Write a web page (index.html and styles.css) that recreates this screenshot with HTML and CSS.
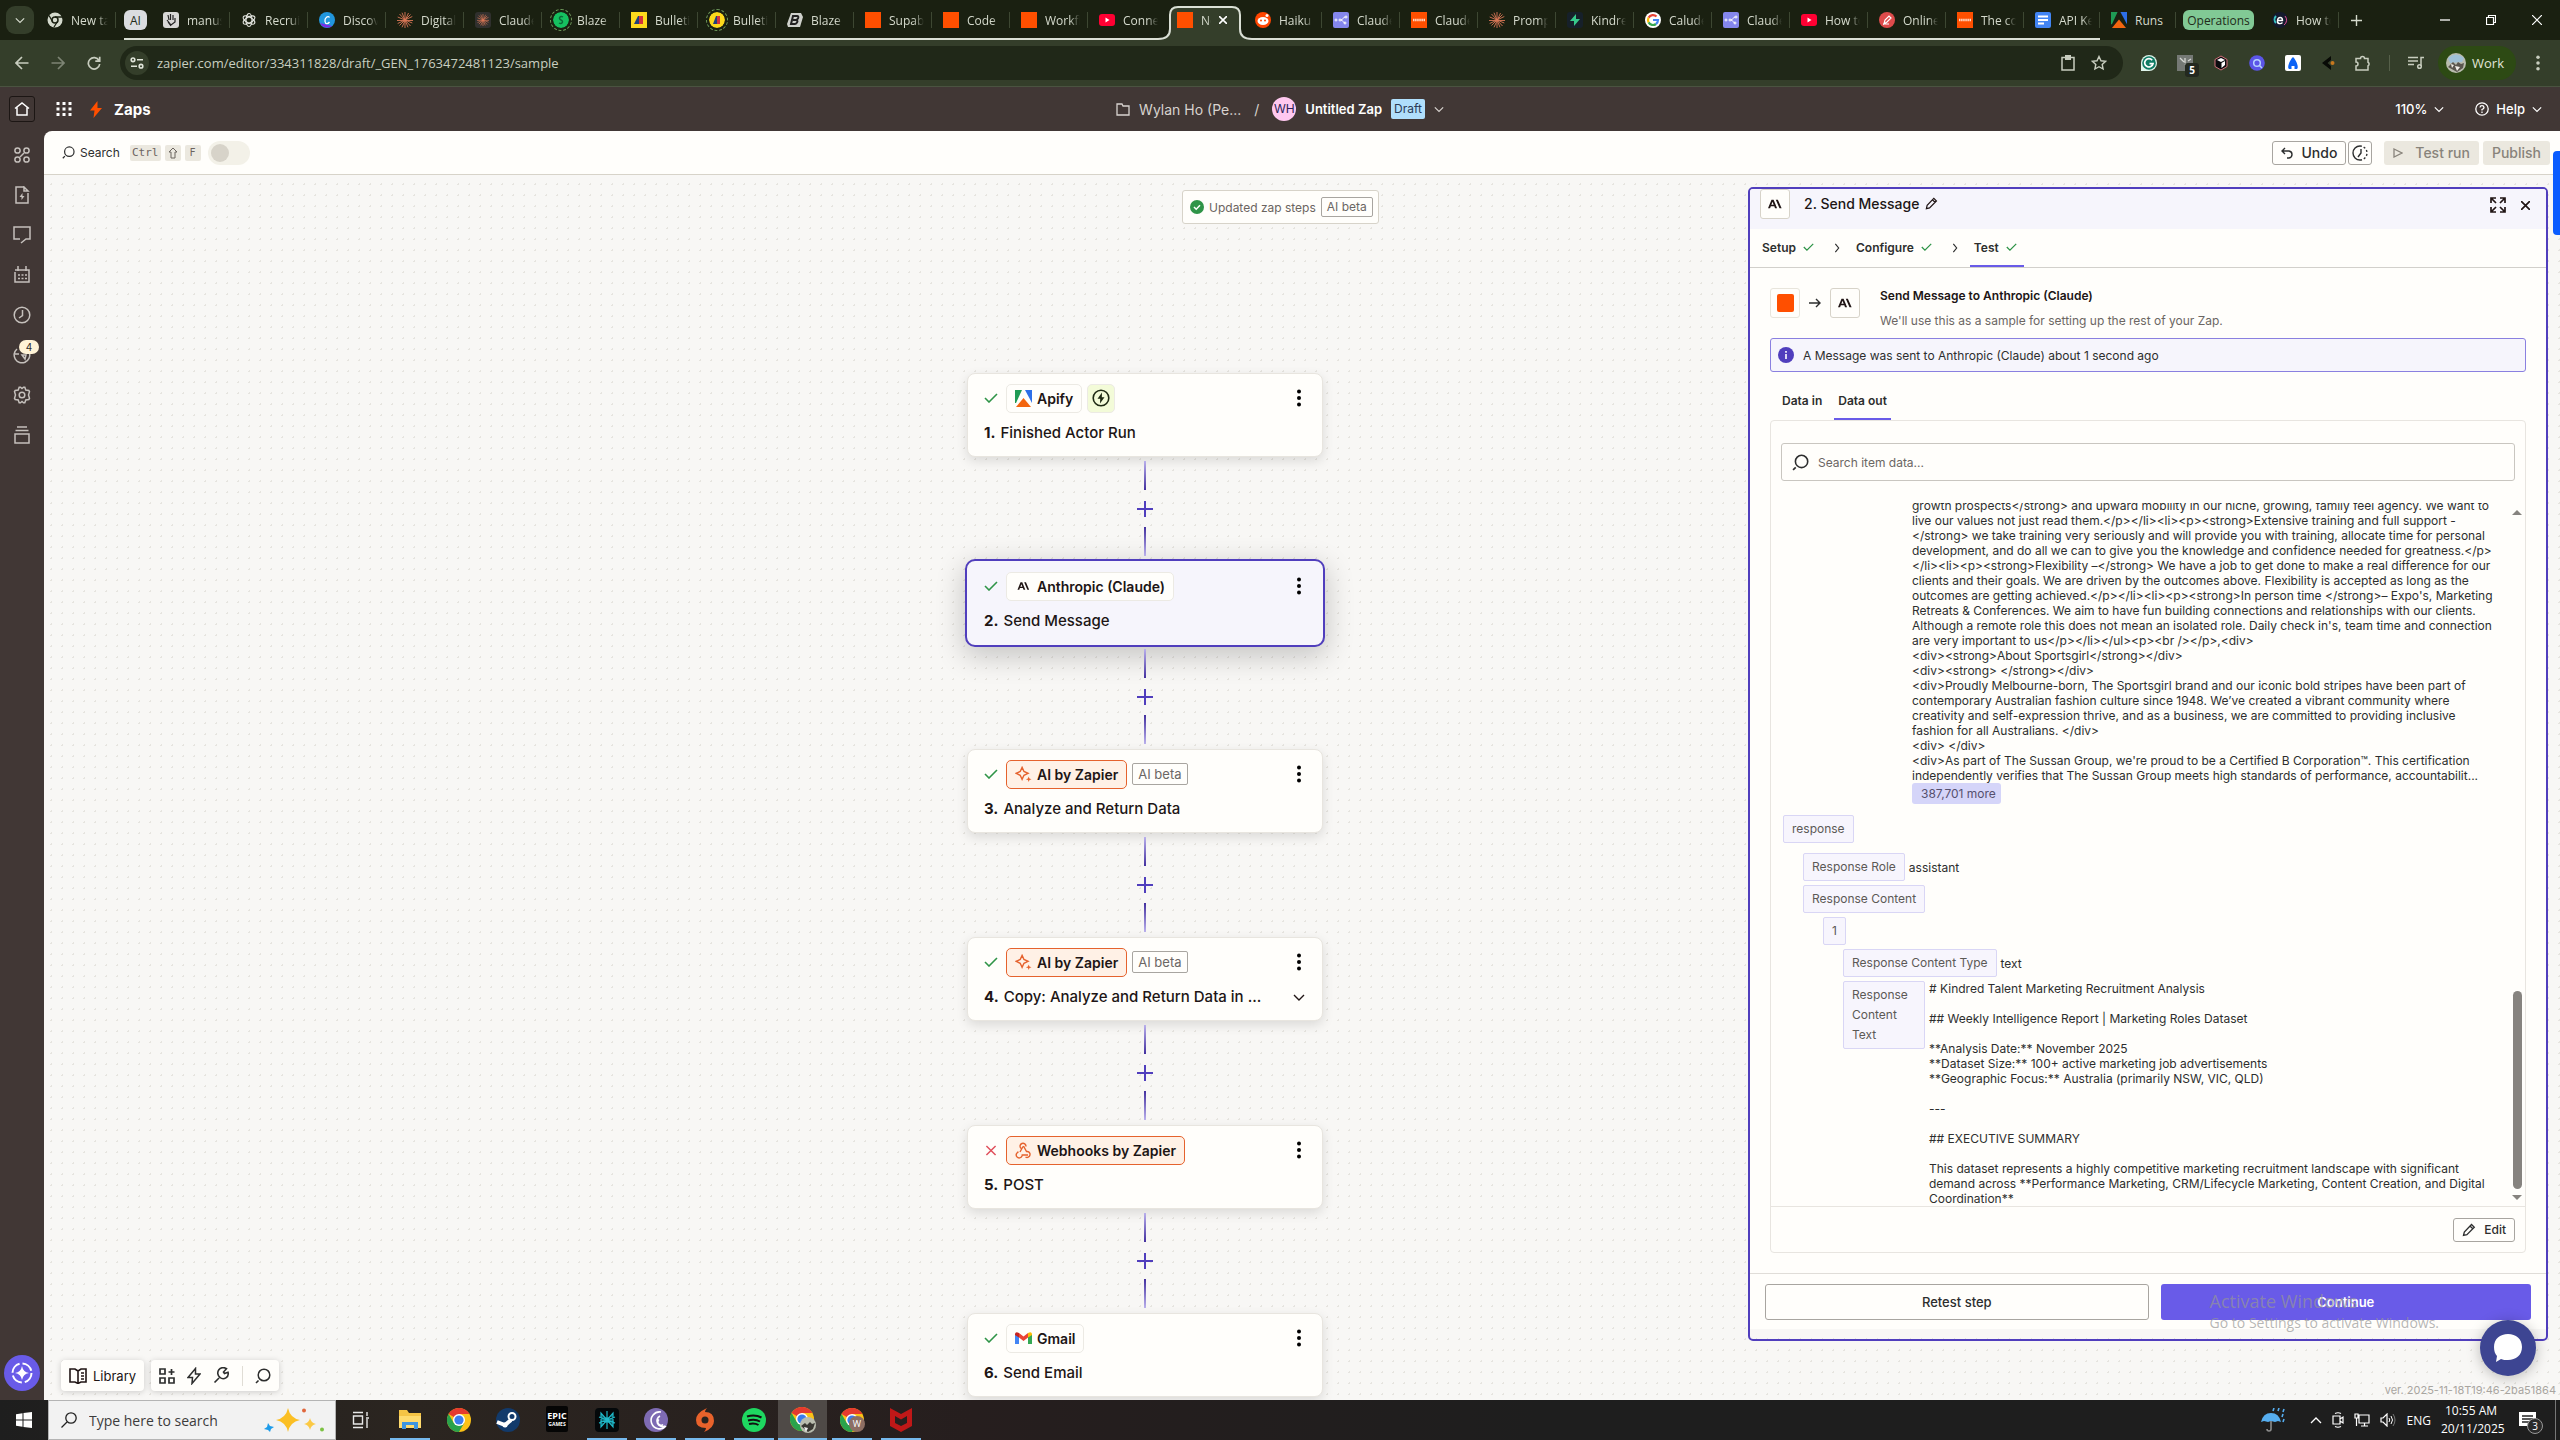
FILE: index.html
```html
<!DOCTYPE html>
<html lang="en">
<head>
  <meta charset="UTF-8" />
  <meta name="viewport" content="width=device-width, initial-scale=1.0"/>
  <title>Untitled Zap | Zapier</title>
  <link rel="stylesheet" href="styles.css">
</head>
<body>

  <!-- shared icons -->
  <svg class="defs" aria-hidden="true">
    <symbol id="i-check" viewBox="0 0 14 10"><path d="M1 5l4 4 8-8" fill="none" stroke="#2f9448" stroke-width="1.6"/></symbol>
    <symbol id="i-cross" viewBox="0 0 12 12"><path d="M1 1l10 10M11 1L1 11" fill="none" stroke="#e0505c" stroke-width="1.6"/></symbol>
    <symbol id="i-down" viewBox="0 0 12 12"><path d="M1 4l5 5 5-5" fill="none" stroke="currentColor" stroke-width="1.4"/></symbol>
    <symbol id="i-right" viewBox="0 0 6 12"><path d="M1 1l4 5-4 5" fill="none" stroke="currentColor" stroke-width="1.4"/></symbol>
    <symbol id="i-plus" viewBox="0 0 16 16"><path d="M8 0v16M0 8h16" stroke="currentColor" stroke-width="2"/></symbol>
    <symbol id="i-kebab" viewBox="0 0 4 18"><circle cx="2" cy="2.5" r="2"/><circle cx="2" cy="9" r="2"/><circle cx="2" cy="15.5" r="2"/></symbol>
    <symbol id="i-search" viewBox="0 0 16 16"><path d="M1 15l2.5-2.5" stroke="currentColor" stroke-width="1.6"/><circle cx="9" cy="7" r="5.8" fill="none" stroke="currentColor" stroke-width="1.5"/></symbol>
    <symbol id="i-pencil" viewBox="0 0 14 14"><path d="M1.5 12.5l.8-3.5L9.500 1.500l2.800 2.800-7.400 7.400z M8 3l2.800 2.800" fill="none" stroke="currentColor" stroke-width="1.3"/></symbol>
    <symbol id="i-anthropic" viewBox="0 0 18 12"><path d="M0 11.500L4.500.5h2.700l4.500 11H9l-.9-2.500H3.600l-.9 2.500zM4.300 7h3L5.800 3.200zM10 .5h2.700l4.800 11h-2.700z" fill="currentColor"/></symbol>
    <symbol id="i-star4" viewBox="0 0 18 18"><path d="M7.500 1.500l2 4.300 4.300 2-4.300 2-2 4.300-2-4.300-4.300-2 4.300-2z" fill="none" stroke="#e5622d" stroke-width="1.5"/><path d="M14.500 11l.8 2.200 2.200.8-2.200.8-.8 2.200-.8-2.200-2.200-.8 2.200-.8z" fill="#e5622d"/></symbol>
    <symbol id="i-claude" viewBox="0 0 16 16"><path d="M8 0v16M0 8.500h16M2.500 2l11 12M13.500 2.500l-11 11M5 .7l6 14.600M11.500 1L5 15.300M.7 5l14.600 6M.7 11.500l14.600-7" stroke="#d97757" stroke-width=".9"/></symbol>
    <symbol id="i-square" viewBox="0 0 16 16"><path d="M0 0h16v16H0z" fill="#ff4f00"/></symbol>
    <symbol id="i-youtube" viewBox="0 0 16 16"><rect y="2" width="16" height="12" rx="3" fill="#f03"/><path d="M6.500 5.500v5l4-2.500z" fill="#fff"/></symbol>
    <symbol id="i-chrome" viewBox="0 0 24 24"><circle cx="12" cy="12" r="12" fill="#fbc116"/><path d="M12 12L1.600 6A12 12 0 0 1 22.400 6H12z" fill="#e53a2e"/><path d="M1.600 6A12 12 0 0 0 12 24l5.200-9L12 12 6.800 15z" fill="#2aa24c"/><circle cx="12" cy="12" r="6" fill="#fff"/><circle cx="12" cy="12" r="4.600" fill="#3b7ded"/></symbol>
    <symbol id="i-node" viewBox="0 0 16 16"><rect width="16" height="16" rx="2" fill="#8587ee"/><g fill="none" stroke="#fff"><circle cx="3" cy="8" r="1"/><circle cx="7" cy="8" r="1"/><path d="M8 8c2 0 2-3 4-3M8 8c2 0 2 3 4 3"/><circle cx="13" cy="5" r="1"/><circle cx="12" cy="11" r="1"/></g></symbol>
    <symbol id="i-zap" viewBox="0 0 16 16"><path d="M0 0h16v16H0z" fill="#ff4f00"/><path d="M2 8h12" stroke="#ffd9c7" stroke-width="2.5" stroke-dasharray="1.500 .6"/></symbol>
    <symbol id="i-apify" viewBox="0 0 17 17"><path d="M0 0h7L1 13H0z" fill="#1f9b55"/><path d="M10 0h7v13z" fill="#2d6fe8"/><path d="M8.500 8L16 17H1z" fill="#f3650f"/></symbol>
  </svg>

  <div class="tabstrip">
    <button class="tab-search" aria-label="Search tabs"><svg width="10" height="10"><use href="#i-down"/></svg></button>
    <a class="tab first" href="#"><svg width="16" height="16" viewBox="0 0 16 16"><circle cx="8" cy="8" r="7.500" fill="#d5dacd"/><circle cx="8" cy="8" r="3" fill="#d5dacd" stroke="#1a2011" stroke-width="1.5"/><path d="M8 5h7M5.500 9.500L2 3.500M10.500 9.500L7 15" stroke="#1a2011" stroke-width="1.3"/></svg><span>New tab</span></a>
    <div class="tab-group">
      <span class="chip-ai">AI</span>
      <a class="tab" href="#"><svg width="16" height="16" viewBox="0 0 16 16"><rect width="16" height="16" rx="3" fill="#d8d8d6"/><path d="M5 3l1 5M7.500 2v6M10 3v5M4 8l4 5 4-3V6M5 10l3 4" fill="none" stroke="#222" stroke-width="1.2"/></svg><span>manus</span></a>
      <a class="tab" href="#"><svg width="16" height="16" viewBox="0 0 16 16"><g fill="none" stroke="#e4e6e0" stroke-width="1.2"><ellipse cx="8" cy="8" rx="3" ry="6.500"/><ellipse cx="8" cy="8" rx="3" ry="6.500" transform="rotate(60 8 8)"/><ellipse cx="8" cy="8" rx="3" ry="6.500" transform="rotate(120 8 8)"/></g></svg><span>Recruit</span></a>
      <a class="tab" href="#"><svg width="16" height="16" viewBox="0 0 16 16"><circle cx="8" cy="8" r="8" fill="#2196dd"/><path d="M1 11A8 8 0 0 0 13 14z" fill="#7d2ae8"/><path d="M10.500 5.500C9 3 5.500 6 6 9.500c.5 3 3 2.500 4.500.5" fill="none" stroke="#fff" stroke-width="1.3"/></svg><span>Discover</span></a>
      <a class="tab" href="#"><svg width="16" height="16"><use href="#i-claude"/></svg><span>Digital</span></a>
      <a class="tab" href="#"><svg class="fav-dark" width="16" height="16"><use href="#i-claude" x="2" y="2" width="12" height="12"/></svg><span>Claude</span></a>
      <a class="tab" href="#"><svg class="fav-ring" width="16" height="16" viewBox="0 0 16 16"><circle cx="8" cy="8" r="8" fill="#16c060"/><path d="M10 5c-3-2-5 2-2 3s1 5-2 3" fill="none" stroke="#0b6b38" stroke-width="1.5"/></svg><span>Blaze</span></a>
      <a class="tab" href="#"><svg width="16" height="16" viewBox="0 0 16 16"><path d="M0 0h16v16H0z" fill="#fcd91c"/><path d="M3 12l4-8h5v8z" fill="#20407c"/><path d="M8 4h4v8H8z" fill="#d2333c"/></svg><span>Bulletin</span></a>
      <a class="tab" href="#"><svg class="fav-ring" width="16" height="16" viewBox="0 0 16 16"><circle cx="8" cy="8" r="8" fill="#fcd91c"/><path d="M4 12l3-8h4v8z" fill="#20407c"/><path d="M8 4h3v8H8z" fill="#d2333c"/></svg><span>Bulletin</span></a>
      <a class="tab" href="#"><svg width="16" height="16" viewBox="0 0 16 16"><path d="M4 1h10l2 4-3 10H1L0 12z" fill="#cfd1cc"/><path d="M6 4h4q2 0 1 2.500L9.500 8q1.500 1 .5 2.500T8 12H4zM6 8h3" fill="none" stroke="#222" stroke-width="2"/></svg><span>Blaze</span></a>
      <a class="tab" href="#"><svg width="16" height="16"><use href="#i-square"/></svg><span>Supabase</span></a>
      <a class="tab" href="#"><svg width="16" height="16"><use href="#i-square"/></svg><span>Code</span></a>
      <a class="tab" href="#"><svg width="16" height="16"><use href="#i-square"/></svg><span>Workflow</span></a>
      <a class="tab last-before" href="#"><svg width="16" height="16"><use href="#i-youtube"/></svg><span>Connect</span></a>
      <div class="tab active">
        <svg class="tab-shape" width="94" height="34" viewBox="0 0 94 34"><path d="M0 33q12 0 12-10V9q0-8 8-8h54q8 0 8 8v14q0 10 12 10v2H0z" fill="#343e2a"/><path d="M0 33q12 0 12-10V9q0-8 8-8h54q8 0 8 8v14q0 10 12 10" fill="none" stroke="#dadfd5" stroke-width="2"/></svg>
        <svg width="16" height="16"><use href="#i-square"/></svg><span>New</span>
        <button aria-label="Close tab"><svg width="8" height="8" viewBox="0 0 8 8"><path d="M0 0l8 8M8 0L0 8" stroke="#fff" stroke-width="1.6"/></svg></button>
      </div>
      <a class="tab" href="#"><svg width="16" height="16" viewBox="0 0 16 16"><circle cx="8" cy="8" r="8" fill="#ff4500"/><ellipse cx="8" cy="9" rx="5.500" ry="4" fill="#fff"/><circle cx="12" cy="3.500" r="1.500" fill="#fff"/><circle cx="6" cy="8.500" r="1" fill="#ff4500"/><circle cx="10" cy="8.500" r="1" fill="#ff4500"/></svg><span>Haiku</span></a>
      <a class="tab" href="#"><svg width="16" height="16"><use href="#i-node"/></svg><span>Claude</span></a>
      <a class="tab" href="#"><svg width="16" height="16"><use href="#i-zap"/></svg><span>Claude</span></a>
      <a class="tab" href="#"><svg width="16" height="16"><use href="#i-claude"/></svg><span>Prompt</span></a>
      <a class="tab" href="#"><svg width="16" height="16" viewBox="0 0 16 16"><rect width="16" height="16" rx="3" fill="#16202a"/><path d="M9 2L3 9h4v5l6-7H9z" fill="#37c98b"/></svg><span>Kindred</span></a>
      <a class="tab" href="#"><svg width="16" height="16" viewBox="0 0 16 16"><circle cx="8" cy="8" r="8" fill="#fff"/><g fill="none" stroke-width="2.2"><path d="M11.500 4.500A5 5 0 0 0 3.600 5.600" stroke="#ea4335"/><path d="M3.600 5.600a5 5 0 0 0 0 4.800" stroke="#fbbc05"/><path d="M3.600 10.400a5 5 0 0 0 7.400 1.600" stroke="#34a853"/><path d="M11 12a5 5 0 0 0 2-4H8" stroke="#4285f4"/></g></svg><span>Calude</span></a>
      <a class="tab" href="#"><svg width="16" height="16"><use href="#i-node"/></svg><span>Claude</span></a>
      <a class="tab" href="#"><svg width="16" height="16"><use href="#i-youtube"/></svg><span>How to</span></a>
      <a class="tab" href="#"><svg width="16" height="16" viewBox="0 0 16 16"><circle cx="8" cy="8" r="8" fill="#dd4b4b"/><path d="M5 12l1-4 4-4 2 2-4 4zM4 12h6" fill="none" stroke="#fff" stroke-width="1.2"/></svg><span>Online</span></a>
      <a class="tab" href="#"><svg width="16" height="16"><use href="#i-zap"/></svg><span>The complete</span></a>
      <a class="tab narrow" href="#"><svg width="16" height="16" viewBox="0 0 16 16"><rect width="16" height="16" rx="2" fill="#4285f4"/><path d="M3 4.500h10M3 8h10M3 11.500h6" stroke="#fff" stroke-width="1.8"/></svg><span>API Keys</span></a>
    </div>
    <a class="tab runs narrow" href="#"><svg width="16" height="16"><use href="#i-apify"/></svg><span>Runs</span></a>
    <span class="chip-ops">Operations</span>
    <a class="tab" href="#"><svg width="16" height="16" viewBox="0 0 16 16"><circle cx="8" cy="8" r="8" fill="#14192e"/><path d="M4 11a5 5 0 0 1 0-7" fill="none" stroke="#38c0c0" stroke-width="2"/><path d="M5.500 8.500h5c0-4-4.500-4-5 0s3.500 3.500 5 2" fill="none" stroke="#fff" stroke-width="1.4"/><path d="M13 4a6 6 0 0 1-1 9" fill="none" stroke="#e0508c"/></svg><span>How to</span></a>
    <button class="new-tab" aria-label="New tab"><svg width="11" height="11"><use href="#i-plus"/></svg></button>
    <div class="window-controls">
      <button aria-label="Minimize"><svg width="10" height="10" viewBox="0 0 10 10"><path d="M0 5h10" stroke="#fff" stroke-width="1.3"/></svg></button>
      <button aria-label="Restore"><svg width="10" height="10" viewBox="0 0 10 10"><path d="M.5 2.500h7v7h-7zM2.500 2.500v-2h7v7h-2" fill="none" stroke="#fff" stroke-width="1.2"/></svg></button>
      <button aria-label="Close"><svg width="10" height="10" viewBox="0 0 10 10"><path d="M0 0l10 10M10 0L0 10" stroke="#fff" stroke-width="1.2"/></svg></button>
    </div>
  </div>

  <div class="toolbar">
    <button class="nav-btn" aria-label="Back"><svg width="14" height="14" viewBox="0 0 14 14"><path d="M13.500 7H1.500M7 1L1 7l6 6" fill="none" stroke="#c8cdbf" stroke-width="1.7"/></svg></button>
    <button class="nav-btn" aria-label="Forward"><svg width="14" height="14" viewBox="0 0 14 14"><path d="M.5 7h12M7 1l6 6-6 6" fill="none" stroke="#7d8474" stroke-width="1.7"/></svg></button>
    <button class="nav-btn" aria-label="Reload"><svg width="14" height="14" viewBox="0 0 14 14"><path d="M12 4.500A5.700 5.700 0 1 0 12.700 8M12.700.8v4.400H8.300" fill="none" stroke="#c8cdbf" stroke-width="1.7"/></svg></button>
    <div class="omnibox">
      <button class="site-info" aria-label="Site information"><svg width="14" height="12" viewBox="0 0 14 12"><g fill="none" stroke="#e1e5da" stroke-width="1.6"><circle cx="3" cy="2.800" r="1.800"/><path d="M7 2.800h6M1 9.200h6"/><circle cx="11" cy="9.200" r="1.800"/></g></svg></button>
      <input type="text" aria-label="Address" value="zapier.com/editor/334311828/draft/_GEN_1763472481123/sample">
      <svg width="14" height="16" viewBox="0 0 14 16"><path d="M1 2.500h12V15H1z" fill="none" stroke="#c8cdbf" stroke-width="1.5"/><path d="M4 0h6v5H4z" fill="#c8cdbf"/></svg>
      <svg width="16" height="16" viewBox="0 0 16 16"><path d="M8 1.500l2 4.300 4.600.5-3.400 3.100.9 4.600L8 11.700 3.900 14l.9-4.600L1.400 6.300 6 5.800z" fill="none" stroke="#c8cdbf" stroke-width="1.4"/></svg>
    </div>
    <div class="extensions">
      <svg width="16" height="16" viewBox="0 0 16 16"><path d="M8 0a8 8 0 1 1 0 16H0V8a8 8 0 0 1 8-8z" fill="#dff5ec"/><circle cx="8" cy="8" r="6.800" fill="#0e7a63"/><path d="M11.200 5.200A4.200 4.200 0 1 0 12 8.700H8.500" fill="none" stroke="#fff" stroke-width="1.7"/></svg>
      <div class="ext-badge"><svg width="16" height="16" viewBox="0 0 16 16"><path d="M0 0h16v16H0z" fill="#757975"/><path d="M3 3l4 4M8 3v5M8 9l4 4M11 6l3-2" stroke="#d5d7d3" stroke-width="1.3"/></svg><span>5</span></div>
      <svg width="16" height="16" viewBox="0 0 16 16"><path d="M8 1l6 3.500v7L8 15l-6-3.500v-7z" fill="#0b0b0f" stroke="#d0707a"/><path d="M4 5l4-2 4 2-4 2zM8.500 8l3.500-2v4L8.500 13z" fill="#fff"/></svg>
      <svg width="16" height="16" viewBox="0 0 16 16"><circle cx="8" cy="8" r="7.800" fill="#5b55e8"/><circle cx="8" cy="8" r="3.300" fill="none" stroke="#b5d1ff" stroke-width="1.5"/><path d="M10 10l3 3" stroke="#b5d1ff" stroke-width="1.5"/></svg>
      <svg width="16" height="16" viewBox="0 0 16 16"><rect width="16" height="16" rx="2" fill="#fff"/><path d="M8 2c4 4 6 11 4 12H9.500v-3h-3v3H4C2 13 4 6 8 2z" fill="#0b62f5"/></svg>
      <svg width="14" height="16" viewBox="0 0 14 16"><path d="M10 1L1 8l9 7v-4L6.500 8 10 5z" fill="#080a06"/><circle cx="11.500" cy="8" r="2" fill="#c8781e"/></svg>
      <svg width="16" height="16" viewBox="0 0 16 16"><path d="M1 3.500h4.500a2 2 0 0 1 4 0H13V7.200a2 2 0 0 1 0 3.600V15H1v-4a2 2 0 0 0 0-4z" fill="none" stroke="#c8cdbf" stroke-width="1.5"/></svg>
    </div>
    <span class="tool-sep"></span>
    <svg width="16" height="14" viewBox="0 0 16 14"><path d="M0 1.500h10M0 5h10M0 8.500h6M13 10V1.500h3" fill="none" stroke="#c8cdbf" stroke-width="1.5"/><circle cx="11.500" cy="10.500" r="1.800" fill="none" stroke="#c8cdbf" stroke-width="1.5"/></svg>
    <button class="profile"><svg width="20" height="20" viewBox="0 0 20 20"><circle cx="10" cy="10" r="10" fill="#b9bcae"/><path d="M2 5q8-7 16 0l-2 4-12 1z" fill="#9fc0d6"/><path d="M2 14l5-5 3 3 2-3 3 2 3-1-1 5-6 4z" fill="#5a564e"/><path d="M5 11l3 1-2 3zM9 13l5 1-3 4z" fill="#f1eee8"/></svg>Work</button>
    <button class="more" aria-label="Chrome menu"><svg width="4" height="16" fill="#c8cdbf"><use href="#i-kebab"/></svg></button>
  </div>

  <div class="app">
    <nav class="rail">
      <a class="home" href="#" aria-label="Home"><svg width="16" height="14" viewBox="0 0 16 14"><path d="M1 6.500L8 1l7 5.500M3 5.500V13h10V5.500" fill="none" stroke="#fff"/></svg></a>
      <a href="#" aria-label="Apps"><svg width="16" height="16" viewBox="0 0 16 16"><circle cx="3.500" cy="3.500" r="2.600"/><circle cx="12.500" cy="3.500" r="2.600"/><circle cx="3.500" cy="12.500" r="2.600"/><circle cx="12.500" cy="12.500" r="2.600"/><path d="M6 10l4-4"/></svg></a>
      <a href="#" aria-label="Templates"><svg width="16" height="18" viewBox="0 0 16 18"><path d="M10 1H2v16h12V7M10 1v4h4z"/><path d="M8.500 7L5.500 11h2v3l3-4h-2z" fill="#c5c0bc" stroke="none"/></svg></a>
      <a href="#" aria-label="Chat"><svg width="18" height="18" viewBox="0 0 18 18"><path d="M7 13H1V1h16v12h-4l-5 4"/></svg></a>
      <a href="#" aria-label="Calendar"><svg width="16" height="18" viewBox="0 0 16 18"><path d="M1 6V16h14V4H1M4 0v5M12 0v5"/><path d="M4 9h9M4 12.500h9" stroke-dasharray="2 1.500"/></svg></a>
      <a href="#" aria-label="History"><svg width="18" height="18" viewBox="0 0 18 18"><circle cx="9" cy="9" r="7.800"/><path d="M9.500 4v5.500L6 12"/></svg></a>
      <a href="#" aria-label="Activity"><svg width="18" height="18" viewBox="0 0 18 18"><path d="M4 3a7.800 7.800 0 1 0 12.500 4M2 8h4M9 9l3 4 1-4z"/></svg><span class="badge">4</span></a>
      <a href="#" aria-label="Settings"><svg width="18" height="18" viewBox="0 0 18 18"><path d="M6.200 1.200h1.300L9 2.500l1.500-1.300h1.300l1 2.800 3 .5.700 1.200L15.500 9l1 3.300-.7 1.200-3 .5-1 2.800h-1.300L9 15.500l-1.500 1.300H6.200l-1-2.800-3-.5-.7-1.200L2.500 9l-1-3.300.7-1.200 3-.5z"/><circle cx="9" cy="9" r="2.800"/></svg></a>
      <a href="#" aria-label="Archive"><svg width="16" height="18" viewBox="0 0 16 18"><path d="M3 1h10M1.500 4.500h13M1 8h14v9H1z"/></svg></a>
      <button class="copilot" aria-label="Copilot"><svg width="24" height="24" viewBox="0 0 24 24"><circle cx="12" cy="12" r="9.500" fill="none" stroke="#fff" stroke-width="2" stroke-dasharray="12 3"/><path d="M12 5q1 6 7 7-6 1-7 7-1-6-7-7 6-1 7-7z" fill="#fff"/></svg></button>
    </nav>

    <div class="main">
      <header class="zap-header">
        <div class="brand">
          <svg width="16" height="16" viewBox="0 0 16 16" fill="#fff"><path d="M.5 1h3v3h-3zM6.500 1h3v3h-3zM12.500 1h3v3h-3zM.5 6.500h3v3h-3zM6.500 6.500h3v3h-3zM12.500 6.500h3v3h-3zM.5 12h3v3h-3zM6.500 12h3v3h-3zM12.500 12h3v3h-3z"/></svg>
          <svg width="12" height="17" viewBox="0 0 12 17"><path d="M7.500 0L0 9.500h4.500L3.500 17 12 7H7.500z" fill="#ff4f00"/></svg>
          <strong>Zaps</strong>
        </div>
        <div class="crumbs">
          <svg width="14" height="13" viewBox="0 0 14 13"><path d="M1 12V1h5l1 2h6v9z" fill="none" stroke="#d8d3cf" stroke-width="1.3"/></svg>
          <a href="#">Wylan Ho (Pe...</a>
          <span class="slash">/</span>
          <span class="avatar">WH</span>
          <b>Untitled Zap</b>
          <span class="draft">Draft</span>
          <svg width="10" height="10"><use href="#i-down"/></svg>
        </div>
        <div class="header-right">
          <button>110% <svg width="10" height="10"><use href="#i-down"/></svg></button>
          <button><svg width="14" height="14" viewBox="0 0 14 14"><circle cx="7" cy="7" r="6.200" fill="none" stroke="#fff" stroke-width="1.3"/><path d="M5 5.500q.2-1.800 2-1.800T9 5.400Q9 6.500 7 7.500v1M7 9.500V11" fill="none" stroke="#fff" stroke-width="1.3"/></svg>Help <svg width="10" height="10"><use href="#i-down"/></svg></button>
        </div>
      </header>

      <div class="editor-bar">
        <svg width="13" height="13"><use href="#i-search"/></svg>
        <label for="canvas-toggle">Search</label>
        <kbd>Ctrl</kbd>
        <kbd class="key"><svg width="10" height="12" viewBox="0 0 10 12"><path d="M5 1L1 5h2v6h4V5h2z" fill="none" stroke="#6b645f"/></svg></kbd>
        <kbd class="key small">F</kbd>
        <input class="toggle" id="canvas-toggle" type="checkbox">
        <div class="actions">
          <button class="btn"><svg width="12" height="12" viewBox="0 0 12 12"><path d="M4 1L1 4l3 3M1 4h7q3 .5 3 3.500T8 11H6" fill="none" stroke="currentColor" stroke-width="1.4"/></svg>Undo</button>
          <button class="btn icon" aria-label="Version history"><svg width="16" height="16" viewBox="0 0 16 16"><path d="M8 1a7 7 0 0 0 0 14" fill="none" stroke="currentColor" stroke-width="1.4"/><path d="M8 15A7 7 0 0 0 8 1" fill="none" stroke="currentColor" stroke-width="1.4" stroke-dasharray="2 2"/><path d="M9 4v4l-3 4" fill="none" stroke="currentColor" stroke-width="1.4"/></svg></button>
          <button class="btn muted run" disabled><svg width="10" height="10" viewBox="0 0 10 10"><path d="M1 1l8 4-8 4z" fill="none" stroke="currentColor" stroke-width="1.3"/></svg>Test run</button>
          <button class="btn muted" disabled>Publish</button>
        </div>
      </div>

      <main class="canvas">
        <div class="toast"><svg width="14" height="14" viewBox="0 0 14 14"><circle cx="7" cy="7" r="7" fill="#2f9448"/><path d="M4 7l2.200 2.200L10 5.200" fill="none" stroke="#fff" stroke-width="1.5"/></svg>Updated zap steps <span class="beta">AI beta</span></div>

        <div class="flow">
          <article class="step">
            <div class="step-top">
              <svg class="status" width="14" height="10"><use href="#i-check"/></svg>
              <span class="app-chip"><svg width="17" height="17"><use href="#i-apify"/></svg>Apify</span>
              <span class="trigger"><svg width="18" height="18" viewBox="0 0 18 18"><circle cx="9" cy="9" r="7.800" fill="none" stroke="#1f2a14" stroke-width="1.6"/><path d="M10 3.500L5.500 9.700h2.700L8 14.500l4.500-6.200H9.800z" fill="#1f2a14"/></svg></span>
              <button class="dots" aria-label="Step menu"><svg width="4" height="18"><use href="#i-kebab"/></svg></button>
            </div>
            <h3><b>1.</b> Finished Actor Run</h3>
          </article>
          <div class="link"><i class="line"></i><button aria-label="Add step"><svg width="16" height="16"><use href="#i-plus"/></svg></button><i class="line up"></i></div>

          <article class="step selected">
            <div class="step-top">
              <svg class="status" width="14" height="10"><use href="#i-check"/></svg>
              <span class="app-chip"><svg width="17" height="8"><use href="#i-anthropic"/></svg>Anthropic (Claude)</span>
              <button class="dots" aria-label="Step menu"><svg width="4" height="18"><use href="#i-kebab"/></svg></button>
            </div>
            <h3><b>2.</b> Send Message</h3>
          </article>
          <div class="link"><i class="line"></i><button aria-label="Add step"><svg width="16" height="16"><use href="#i-plus"/></svg></button><i class="line up"></i></div>

          <article class="step">
            <div class="step-top">
              <svg class="status" width="14" height="10"><use href="#i-check"/></svg>
              <span class="app-chip zapier"><svg width="17" height="17"><use href="#i-star4"/></svg>AI by Zapier</span>
              <span class="beta">AI beta</span>
              <button class="dots" aria-label="Step menu"><svg width="4" height="18"><use href="#i-kebab"/></svg></button>
            </div>
            <h3><b>3.</b> Analyze and Return Data</h3>
          </article>
          <div class="link"><i class="line"></i><button aria-label="Add step"><svg width="16" height="16"><use href="#i-plus"/></svg></button><i class="line up"></i></div>

          <article class="step">
            <div class="step-top">
              <svg class="status" width="14" height="10"><use href="#i-check"/></svg>
              <span class="app-chip zapier"><svg width="17" height="17"><use href="#i-star4"/></svg>AI by Zapier</span>
              <span class="beta">AI beta</span>
              <button class="dots" aria-label="Step menu"><svg width="4" height="18"><use href="#i-kebab"/></svg></button>
            </div>
            <h3><b>4.</b> Copy: Analyze and Return Data in ... <svg class="expand" width="12" height="12"><use href="#i-down"/></svg></h3>
          </article>
          <div class="link"><i class="line"></i><button aria-label="Add step"><svg width="16" height="16"><use href="#i-plus"/></svg></button><i class="line up"></i></div>

          <article class="step">
            <div class="step-top">
              <svg class="status" width="14" height="11"><use href="#i-cross"/></svg>
              <span class="app-chip zapier"><svg width="17" height="17" viewBox="0 0 17 17"><g fill="none" stroke="#e5622d" stroke-width="1.4"><path d="M6 6.500a3 3 0 1 1 5-2M8.500 4l3 5.500a3 3 0 1 1-1 5.500M8 4.500L5 10"/><path d="M3.500 10a3 3 0 1 0 3.500 4l.2-1H13"/></g></svg>Webhooks by Zapier</span>
              <button class="dots" aria-label="Step menu"><svg width="4" height="18"><use href="#i-kebab"/></svg></button>
            </div>
            <h3><b>5.</b> POST</h3>
          </article>
          <div class="link"><i class="line"></i><button aria-label="Add step"><svg width="16" height="16"><use href="#i-plus"/></svg></button><i class="line up"></i></div>

          <article class="step">
            <div class="step-top">
              <svg class="status" width="14" height="10"><use href="#i-check"/></svg>
              <span class="app-chip"><svg width="17" height="12" viewBox="0 0 17 12"><path d="M0 2v10h4V5z" fill="#4285f4"/><path d="M13 5v7h4V2z" fill="#34a853"/><path d="M4 1l4.500 3.500L13 1v4.500L8.500 9 4 5.500z" fill="#ea4335"/><path d="M0 2q.5-3 4-1v4.500L0 3z" fill="#c5221f"/><path d="M17 2q-.5-3-4-1v4.500L17 3z" fill="#fbbc04"/></svg>Gmail</span>
              <button class="dots" aria-label="Step menu"><svg width="4" height="18"><use href="#i-kebab"/></svg></button>
            </div>
            <h3><b>6.</b> Send Email</h3>
          </article>
        </div>

        <div class="tools">
          <button class="tool-box library"><svg width="18" height="16" viewBox="0 0 18 16"><path d="M9 3L6 1H1v13h5l3 1.500L12 14h5V1h-5L9 3v12M12 5h3M12 8h3M12 11h3" fill="none" stroke="currentColor" stroke-width="1.6"/></svg>Library</button>
          <div class="tool-box">
            <button aria-label="Apps"><svg width="16" height="16" viewBox="0 0 16 16"><path d="M1 1h5v5H1zM1 10h5v5H1zM10 10h5v5h-5zM12.500 1v6M9.500 4h6" fill="none" stroke="currentColor" stroke-width="1.7"/></svg></button>
            <button aria-label="Triggers"><svg width="14" height="18" viewBox="0 0 14 18"><path d="M8.500 1.500L1 10.500h4.500L5 16.500l8-9.500H8.500z" fill="none" stroke="currentColor" stroke-width="1.5"/></svg></button>
            <button aria-label="Tools"><svg width="17" height="17" viewBox="0 0 17 17"><path d="M1.500 15.500L6 11M7 10.500a5 5 0 1 1 6.500-8.800L10.500 5l1 1.500L15 5.300a5 5 0 0 1-8 5.200z" fill="none" stroke="currentColor" stroke-width="1.6"/></svg></button>
            <span class="bar"></span>
            <button aria-label="Find"><svg width="16" height="16"><use href="#i-search"/></svg></button>
          </div>
        </div>

        <aside class="panel">
          <div class="panel-head">
            <span class="logo-box"><svg width="14" height="10"><use href="#i-anthropic"/></svg></span>
            <h2>2. Send Message</h2>
            <svg width="13" height="13"><use href="#i-pencil"/></svg>
            <button class="push" aria-label="Expand"><svg width="16" height="16" viewBox="0 0 16 16"><path d="M1 6V1h5M1 1l5 5M10 1h5v5M15 1l-5 5M1 10v5h5M1 15l5-5M15 10v5h-5M15 15l-5-5" fill="none" stroke="currentColor" stroke-width="1.7"/></svg></button>
            <button aria-label="Close panel"><svg width="9" height="9" viewBox="0 0 9 9"><path d="M0 0l9 9M9 0L0 9" stroke="currentColor" stroke-width="1.7"/></svg></button>
          </div>
          <div class="stages">
            <a href="#">Setup <svg width="11" height="8"><use href="#i-check"/></svg></a>
            <svg width="6" height="10"><use href="#i-right"/></svg>
            <a href="#">Configure <svg width="11" height="8"><use href="#i-check"/></svg></a>
            <svg width="6" height="10"><use href="#i-right"/></svg>
            <a class="on" href="#">Test <svg width="11" height="8"><use href="#i-check"/></svg></a>
          </div>
          <div class="panel-body">
            <div class="summary">
              <span class="logo-box pale"><i class="orange"></i></span>
              <svg width="12" height="10" viewBox="0 0 12 10"><path d="M0 5h11M7 1l4 4-4 4" fill="none" stroke="currentColor" stroke-width="1.4"/></svg>
              <span class="logo-box"><svg width="14" height="10"><use href="#i-anthropic"/></svg></span>
              <div class="summary-text">
                <h4>Send Message to Anthropic (Claude)</h4>
                <p>We'll use this as a sample for setting up the rest of your Zap.</p>
              </div>
            </div>
            <div class="notice"><svg width="16" height="16" viewBox="0 0 16 16"><circle cx="8" cy="8" r="8" fill="#503ebd"/><path d="M8 7v5M8 4v1.800" stroke="#fff" stroke-width="1.6"/></svg>A Message was sent to Anthropic (Claude) about 1 second ago</div>
            <div class="data-tabs">
              <button>Data in</button>
              <button class="on">Data out</button>
            </div>
            <div class="data-box">
              <label class="data-search"><svg width="17" height="17"><use href="#i-search"/></svg><input type="text" placeholder="Search item data..." aria-label="Search item data"></label>
              <div class="data-scroll">
                <div class="data-content">
                  <div class="raw">growth prospects&lt;/strong&gt; and upward mobility in our niche, growing, family feel agency. We want to
live our values not just read them.&lt;/p&gt;&lt;/li&gt;&lt;li&gt;&lt;p&gt;&lt;strong&gt;Extensive training and full support -
&lt;/strong&gt; we take training very seriously and will provide you with training, allocate time for personal
development, and do all we can to give you the knowledge and confidence needed for greatness.&lt;/p&gt;
&lt;/li&gt;&lt;li&gt;&lt;p&gt;&lt;strong&gt;Flexibility –&lt;/strong&gt; We have a job to get done to make a real difference for our
clients and their goals. We are driven by the outcomes above. Flexibility is accepted as long as the
outcomes are getting achieved.&lt;/p&gt;&lt;/li&gt;&lt;li&gt;&lt;p&gt;&lt;strong&gt;In person time &lt;/strong&gt;– Expo's, Marketing
Retreats &amp; Conferences. We aim to have fun building connections and relationships with our clients.
Although a remote role this does not mean an isolated role. Daily check in's, team time and connection
are very important to us&lt;/p&gt;&lt;/li&gt;&lt;/ul&gt;&lt;p&gt;&lt;br /&gt;&lt;/p&gt;,&lt;div&gt;
&lt;div&gt;&lt;strong&gt;About Sportsgirl&lt;/strong&gt;&lt;/div&gt;
&lt;div&gt;&lt;strong&gt; &lt;/strong&gt;&lt;/div&gt;
&lt;div&gt;Proudly Melbourne-born, The Sportsgirl brand and our iconic bold stripes have been part of
contemporary Australian fashion culture since 1948. We’ve created a vibrant community where
creativity and self-expression thrive, and as a business, we are committed to providing inclusive
fashion for all Australians. &lt;/div&gt;
&lt;div&gt; &lt;/div&gt;
&lt;div&gt;As part of The Sussan Group, we're proud to be a Certified B Corporation™. This certification
independently verifies that The Sussan Group meets high standards of performance, accountabilit...</div>
                  <button class="more-chip">387,701 more</button>
                  <div class="row root"><span class="key-chip">response</span></div>
                  <div class="row l1"><span class="key-chip">Response Role</span><span>assistant</span></div>
                  <div class="row l1"><span class="key-chip">Response Content</span></div>
                  <div class="row l2"><span class="key-chip">1</span></div>
                  <div class="row l3"><span class="key-chip">Response Content Type</span><span>text</span></div>
                  <div class="row l3 top"><span class="key-chip wrap">Response Content Text</span><div class="value"># Kindred Talent Marketing Recruitment Analysis

## Weekly Intelligence Report | Marketing Roles Dataset

**Analysis Date:** November 2025
**Dataset Size:** 100+ active marketing job advertisements
**Geographic Focus:** Australia (primarily NSW, VIC, QLD)

---

## EXECUTIVE SUMMARY

This dataset represents a highly competitive marketing recruitment landscape with significant
demand across **Performance Marketing, CRM/Lifecycle Marketing, Content Creation, and Digital
Coordination**</div></div>
                </div>
                <div class="scrollbar"><i class="arrow-up"></i><i class="thumb"></i><i class="arrow-down"></i></div>
              </div>
              <div class="data-foot"><button class="btn edit"><svg width="14" height="14"><use href="#i-pencil"/></svg>Edit</button></div>
            </div>
          </div>
          <div class="panel-foot">
            <button class="retest">Retest step</button>
            <button class="continue">Continue</button>
          </div>
        </aside>

        <div class="watermark"><p>Activate Windows</p><small>Go to Settings to activate Windows.</small></div>
        <button class="chat" aria-label="Open chat"><svg width="30" height="28" viewBox="0 0 30 28"><path d="M15 0c8 0 14 5 14 13s-6 13-14 13c-3 0-5 0-7-1l-5 3 1-6C2 20 1 17 1 13 1 5 7 0 15 0z" fill="#fff"/></svg></button>
        <span class="version">ver. 2025-11-18T19:46-2ba51864</span>
      </main>
      <button class="feedback" aria-label="Feedback"></button>
    </div>
  </div>

  <footer class="taskbar">
    <button class="start" aria-label="Start"><svg width="16" height="16" viewBox="0 0 16 16" fill="#fff"><path d="M0 2.200l6.500-1v6.300H0zM7.500 1L16 0v7.500H7.500zM0 8.500h6.500v6.300l-6.500-1zM7.500 8.500H16V16l-8.500-1z"/></svg></button>
    <label class="task-search">
      <svg width="16" height="16" viewBox="0 0 16 16"><circle cx="10" cy="6" r="5.200" fill="none" stroke="#222" stroke-width="1.3"/><path d="M6 10l-5.500 5.500" stroke="#222" stroke-width="1.3"/></svg>
      <input type="text" placeholder="Type here to search" aria-label="Type here to search">
      <svg width="62" height="24" viewBox="0 0 62 24"><path d="M24 0q2 10 12 12-10 2-12 12-2-10-12-12 10-2 12-12z" fill="#fbbf24"/><path d="M46 10q1 5 6 6-5 1-6 6-1-5-6-6 5-1 6-6z" fill="#fbc944"/><path d="M4 15l2 3 4 1-3 2-1 3-2-2-4-1 3-2z" fill="#1c9bea"/><circle cx="40" cy="2.500" r="2" fill="#e0663c"/><circle cx="58" cy="21.500" r="2" fill="#7cc243"/></svg>
    </label>
    <div class="pins">
      <button aria-label="Task view"><svg width="18" height="18" viewBox="0 0 18 18"><path d="M1.500 5h9v8h-9zM1 1.500h10M1 16.500h10M15 1v4M15 8v9M14 7h3" fill="none" stroke="#e8e8e8" stroke-width="1.4"/></svg></button>
      <button class="open" aria-label="File Explorer"><svg width="24" height="22" viewBox="0 0 24 22"><path d="M1 1h8l2 3h12v15H1z" fill="#f5c445"/><path d="M1 7h22v12H1z" fill="#ffdb6e"/><path d="M4 20v-7h16v7h-4v-4H8v4z" fill="#3d95e0"/></svg></button>
      <button aria-label="Chrome"><svg width="24" height="24"><use href="#i-chrome"/></svg></button>
      <button aria-label="Steam"><svg width="24" height="24" viewBox="0 0 24 24"><circle cx="12" cy="12" r="12" fill="#123a6b"/><path d="M1 14l8 3 6-5" stroke="#fff" stroke-width="4" fill="none"/><circle cx="16" cy="8.500" r="3.500" fill="#123a6b" stroke="#fff" stroke-width="2"/><circle cx="9" cy="17" r="2.500" fill="#fff"/></svg></button>
      <button class="epic" aria-label="Epic Games"><span>EPIC</span><small>GAMES</small></button>
      <button class="open" aria-label="Perplexity"><svg width="24" height="24" viewBox="0 0 24 24"><rect width="24" height="24" rx="4" fill="#04080a"/><path d="M12 3v18M12 12L6 5v14l6-7zM12 12l6-7v14zM4 9l8 3 8-3M4 15l8-3 8 3" fill="#1fb8c8" fill-opacity=".5" stroke="#1fb8c8" stroke-width="1.2"/></svg></button>
      <button class="open" aria-label="BitTorrent"><svg width="24" height="24" viewBox="0 0 24 24"><circle cx="12" cy="12" r="12" fill="#7e6bb3"/><path d="M17 4A8.500 8.500 0 1 0 22 18M16 8a5.500 5.500 0 1 0 5 10M15 11.500a3 3 0 1 0 4 5" fill="none" stroke="#fff" stroke-width="1.6"/></svg></button>
      <button class="open" aria-label="Origin"><svg width="20" height="24" viewBox="0 0 20 24"><path d="M12 0q-2 2-2 4 9 0 9 9 0 7-10 11 2-2 2-4-10 0-10-8Q1 5 12 0z" fill="#e8622b"/><circle cx="10" cy="12" r="3.500" fill="#28221e"/></svg></button>
      <button class="open" aria-label="Spotify"><svg width="24" height="24" viewBox="0 0 24 24"><circle cx="12" cy="12" r="12" fill="#1ed760"/><path d="M5 8.500q8-2.500 14.500 1M6 12.500q7-2 12 1M7 16q5.500-1.500 9.500 1" fill="none" stroke="#111" stroke-width="2"/></svg></button>
      <button class="open current" aria-label="Chrome Work"><svg width="26" height="26" viewBox="0 0 26 26"><use href="#i-chrome" width="24" height="24"/><circle cx="18" cy="18" r="8" fill="#b9bcae"/><path d="M11 19l4-3 2 2 3-3 2 2 3-1-2 6-5 3z" fill="#3a3833"/><path d="M14 20l4 1-2 4z" fill="#eee"/></svg></button>
      <button class="open w-badge" aria-label="Chrome W"><svg width="24" height="24"><use href="#i-chrome"/></svg><span>W</span></button>
      <button class="open" aria-label="McAfee"><svg width="22" height="24" viewBox="0 0 22 24"><path d="M0 0l11 6L22 0v18l-11 6-11-6zM5 8v7l6 3 6-3V8l-6 3.500z" fill="#c01818" fill-rule="evenodd"/></svg></button>
    </div>
    <div class="tray">
      <svg class="umbrella" width="26" height="24" viewBox="0 0 26 24"><path d="M1 14Q3 5 11 5t10 9l-3-1-3 1-4-1-3 1-4-1z" fill="#56aef0"/><path d="M11 13v8q0 2-2 2t-2-2" fill="none" stroke="#8c8c8c" stroke-width="1.6"/><path d="M14 0l-1 3M19 0l-1 3M24 1l-1 3M23 6l-1 3M24 11l-1 3" stroke="#56aef0" stroke-width="1.6"/></svg>
      <svg width="12" height="8" viewBox="0 0 12 8"><path d="M1 7l5-5 5 5" fill="none" stroke="#fff" stroke-width="1.3"/></svg>
      <svg width="12" height="16" viewBox="0 0 12 16"><path d="M3 1.500q3-1.500 6 0M1 4h7v8H1zM8 7l3-2v6L8 9M3 14.500q3 1.500 6 0" fill="none" stroke="#fff" stroke-width="1.2"/></svg>
      <svg width="16" height="14" viewBox="0 0 16 14"><path d="M5 2h10v8H5zM7 13h7M10.500 10v3M1 1h3v4H1zM2.500 5v8" fill="none" stroke="#fff" stroke-width="1.2"/></svg>
      <svg width="17" height="14" viewBox="0 0 17 14"><path d="M1 5h2l4-4v12L3 9H1z" fill="none" stroke="#fff" stroke-width="1.2"/><path d="M9 5q1.500 2 0 4M11 3q3 4 0 8" fill="none" stroke="#fff"/><path d="M13 1q4 6 0 12" fill="none" stroke="#777"/></svg>
      <span>ENG</span>
      <div class="clock">10:55 AM<br>20/11/2025</div>
      <div class="notif"><svg width="17" height="17" viewBox="0 0 17 17"><path d="M0 0h17v14h-4v3l-4-3H0z" fill="#fff"/><path d="M3 4h11M3 7h11M3 10h7" stroke="#222" stroke-width="1.3"/></svg><span>3</span></div>
      <i class="peek"></i>
    </div>
  </footer>

</body>
</html>
```
FILE: styles.css
```css
* {
  box-sizing: border-box;
}

body {
  margin: 0;
  height: 100vh;
  display: flex;
  flex-direction: column;
  overflow: hidden;
  font-family: Inter, sans-serif;
  font-size: 13px;
  color: #2d2e2e;
  background: #413735;
}

button {
  font: inherit;
  color: inherit;
  background: none;
  border: none;
  padding: 0;
  cursor: pointer;
  display: flex;
  align-items: center;
  justify-content: center;
}

a {
  color: inherit;
  text-decoration: none;
}

h2, h3, h4, p {
  margin: 0;
}

svg {
  flex: none;
  display: block;
}

.defs {
  position: absolute;
  width: 0;
  height: 0;
}

/* browser tabs */
.tabstrip {
  flex: none;
  height: 40px;
  display: flex;
  background: #1a2011;
  color: #d5dacd;
  font-family: "Open Sans", sans-serif;
  font-size: 12px;
}

.tab-search {
  width: 28px;
  height: 28px;
  margin: 6px 2px 6px 6px;
  border-radius: 9px;
  background: #343e2a;
}

.tab {
  width: 78px;
  height: 40px;
  padding: 0 8px 0 11px;
  display: flex;
  align-items: center;
  gap: 8px;
  position: relative;
}

.tab span {
  flex: 1;
  overflow: hidden;
  white-space: nowrap;
  mask-image: linear-gradient(90deg, #000 70%, transparent);
}

.tab::after {
  content: "";
  position: absolute;
  right: 0;
  top: 12px;
  width: 1px;
  height: 16px;
  background: #3d4732;
}

.tab.first {
  width: 80px;
}

.tab.narrow {
  width: 76px;
}

.tab.last-before::after, .tab.active::after {
  display: none;
}

.tab.runs span {
  mask-image: none;
}

.tab-group {
  display: flex;
  align-items: center;
  box-shadow: inset 0 -2px #dadfd5;
  margin-left: 8px;
}

.chip-ai, .chip-ops {
  flex: none;
  height: 20px;
  border-radius: 6px;
  display: flex;
  align-items: center;
  justify-content: center;
  color: #222b1a;
}

.chip-ai {
  width: 23px;
  margin-right: 5px;
  background: #dadce0;
}

.chip-ops {
  width: 71px;
  margin: 10px 7px;
  background: #81c995;
}

.fav-dark {
  background: #30302e;
  border-radius: 3px;
}

.fav-ring {
  border-radius: 50%;
  outline: 1px dashed #6f9a5c;
  outline-offset: 2px;
}

.tab.active svg, .tab.active span, .tab.active button {
  position: relative;
}

.tab.active .tab-shape {
  position: absolute;
  left: -8px;
  top: 6px;
}

.tab.active span {
  max-width: 10px;
}

.new-tab {
  width: 34px;
}

.window-controls {
  display: flex;
  margin-left: auto;
}

.window-controls button {
  width: 46px;
}

/* address bar */
.toolbar {
  flex: none;
  height: 47px;
  display: flex;
  align-items: center;
  padding: 0 12px 0 4px;
  background: #343e2a;
  border-bottom: 1px solid #4a5340;
  font-family: "Open Sans", sans-serif;
  color: #e1e5da;
}

.nav-btn {
  width: 36px;
  height: 34px;
}

.omnibox {
  flex: 1;
  height: 34px;
  margin-left: 8px;
  padding: 0 16px 0 5px;
  display: flex;
  align-items: center;
  gap: 16px;
  border-radius: 17px;
  background: #202818;
}

.omnibox input {
  flex: 1;
  margin-left: -8px;
  padding: 0;
  border: none;
  background: none;
  color: #c9cfc0;
  font: 13px "Open Sans", sans-serif;
}

.site-info {
  width: 24px;
  height: 24px;
  border-radius: 50%;
  background: #343e2a;
}

.extensions {
  display: flex;
  align-items: center;
  gap: 20px;
  margin-left: 18px;
}

.ext-badge {
  position: relative;
}

.ext-badge span {
  position: absolute;
  left: 8px;
  top: 8px;
  width: 14px;
  height: 14px;
  border-radius: 3px;
  background: #23281f;
  color: #fff;
  font-size: 10px;
  font-weight: 700;
  line-height: 14px;
  text-align: center;
}

.tool-sep {
  width: 1px;
  height: 16px;
  margin: 0 18px;
  background: #56604a;
}

.profile {
  height: 34px;
  margin: 0 12px 0 14px;
  padding: 0 12px 0 8px;
  gap: 6px;
  border-radius: 17px;
  background: #2d4a14;
}

.more {
  width: 20px;
}

/* zapier shell */
.app {
  flex: 1;
  min-height: 0;
  display: flex;
}

.rail {
  width: 44px;
  flex: none;
  display: flex;
  flex-direction: column;
  align-items: center;
  padding: 9px 0;
}

.rail a {
  width: 26px;
  height: 40px;
  display: flex;
  align-items: center;
  justify-content: center;
  position: relative;
}

.rail a svg {
  fill: none;
  stroke: #c5c0bc;
  stroke-width: 1.5;
}

.rail .home {
  height: 26px;
  margin-bottom: 13px;
  border: 1px solid #1c1614;
  border-radius: 3px;
}

.badge {
  position: absolute;
  left: 10px;
  top: 5px;
  width: 20px;
  height: 14px;
  border-radius: 7px;
  background: #fff3d6;
  color: #2d2e2e;
  font-size: 10px;
  line-height: 14px;
  text-align: center;
}

.copilot {
  width: 36px;
  height: 36px;
  margin-top: auto;
  border-radius: 50%;
  background: #695be8;
}

.main {
  flex: 1;
  min-width: 0;
  display: flex;
  flex-direction: column;
  position: relative;
}

.zap-header {
  height: 44px;
  flex: none;
  display: grid;
  grid-template-columns: 1fr auto 1fr;
  align-items: center;
  color: #fff;
  padding: 0 18px 0 12px;
}

.brand {
  display: flex;
  align-items: center;
  gap: 12px;
}

.brand strong {
  font-size: 15px;
}

.brand svg + svg {
  margin-left: 6px;
}

.crumbs {
  display: flex;
  align-items: center;
  gap: 9px;
  margin-right: 38px;
  color: #d8d3cf;
  font-size: 14px;
}

.crumbs .slash {
  margin: 0 4px;
}

.crumbs b {
  color: #fff;
  font-weight: 600;
  font-size: 13px;
}

.avatar {
  width: 24px;
  height: 24px;
  border-radius: 50%;
  background: #ffc8f0;
  color: #2b2358;
  font-size: 12px;
  line-height: 24px;
  text-align: center;
}

.draft {
  height: 20px;
  padding: 0 3px;
  border-radius: 2px;
  background: #b0dffc;
  color: #2b3a55;
  font-size: 12px;
  line-height: 20px;
}

.header-right {
  display: flex;
  justify-content: flex-end;
  gap: 31px;
  font-weight: 500;
}

.header-right button {
  gap: 7px;
}

.editor-bar {
  height: 44px;
  flex: none;
  display: flex;
  align-items: center;
  padding: 0 10px 0 18px;
  background: #fffefb;
  border-radius: 8px 0 0 0;
  border-bottom: 1px solid #d7d3c9;
}

.editor-bar label {
  width: 50px;
  margin-left: 5px;
  font-size: 12px;
}

kbd {
  height: 16px;
  padding: 0 2px;
  margin-right: 4px;
  border-radius: 2px;
  background: #ebe8df;
  color: #6b645f;
  font: 11px/16px "DejaVu Sans Mono", monospace;
}

.key {
  width: 16px;
  display: flex;
  align-items: center;
  justify-content: center;
}

.key.small {
  font-size: 10px;
}

.toggle {
  appearance: none;
  width: 42px;
  height: 24px;
  margin: 0 0 0 3px;
  padding: 3px;
  border-radius: 12px;
  background: #f3f1e8;
}

.toggle::before {
  content: "";
  display: block;
  width: 18px;
  height: 18px;
  border-radius: 50%;
  background: #d7d3c9;
}

.actions {
  margin-left: auto;
  display: flex;
  gap: 4px;
}

.btn {
  height: 24px;
  padding: 0 8px;
  gap: 8px;
  border: 1px solid #a8a5a0;
  border-radius: 3px;
  background: #fffefb;
  font-size: 14px;
  font-weight: 500;
}

.btn.icon {
  width: 24px;
  padding: 0;
  margin-left: -2px;
}

.btn.muted {
  border: none;
  padding: 0 9px;
  background: #ebe8df;
  color: #88837b;
}

.btn.run {
  margin-left: 8px;
  gap: 12px;
}

.feedback {
  position: absolute;
  right: 0;
  top: 64px;
  width: 7px;
  height: 84px;
  border-radius: 4px 0 0 4px;
  background: #0a5cff;
}

/* canvas */
.canvas {
  flex: 1;
  min-height: 0;
  position: relative;
  overflow: hidden;
  display: flex;
  justify-content: flex-end;
  padding: 12px 12px 59px 0;
  background: #f8f7f5 radial-gradient(circle, #e6e4df 1px, transparent 1px) 2px 4px / 11px 11px;
}

.toast {
  position: absolute;
  top: 15px;
  left: 1138px;
  height: 34px;
  padding: 0 5px 0 7px;
  display: flex;
  align-items: center;
  gap: 5px;
  border: 1px solid #d7d3c9;
  border-radius: 3px;
  background: #fffefb;
  color: #6b645f;
  font-size: 12px;
}

.beta {
  height: 22px;
  padding: 0 5px;
  border: 1px solid #a8a5a0;
  border-radius: 2px;
  background: #fffefb;
  color: #6b6663;
  font-size: 13px;
  line-height: 20px;
}

.toast .beta {
  height: 20px;
  font-size: 12px;
  line-height: 18px;
}

.flow {
  position: absolute;
  left: 923px;
  top: 198px;
  width: 356px;
}

.step {
  height: 84px;
  padding: 9px 17px 0 16px;
  border: 1px solid #e8e5df;
  border-radius: 8px;
  background: #fffefb;
  box-shadow: 0 4px 12px rgba(0, 0, 0, 0.12);
}

.step.selected {
  border-color: #f7f5fd;
  outline: 2px solid #503ebd;
  background: #f6f5fc;
  box-shadow: 0 8px 28px 4px rgba(0, 0, 0, 0.2);
}

.step-top {
  display: flex;
  align-items: center;
  height: 30px;
}

.status {
  margin-right: 8px;
}

.app-chip, .trigger {
  height: 29px;
  display: flex;
  align-items: center;
  gap: 5px;
  padding: 0 8px;
  border: 1px solid #eceae4;
  border-radius: 5px;
  background: #fffefb;
  color: #201515;
  font-size: 14px;
  font-weight: 600;
}

.app-chip.zapier {
  border-color: #e5622d;
  background: #fff1e6;
}

.trigger {
  margin-left: 5px;
  padding: 0 4px;
  background: #f3fbd8;
}

.step .beta {
  margin-left: 5px;
}

.dots {
  width: 12px;
  margin-left: auto;
}

.step h3 {
  display: flex;
  align-items: center;
  gap: 5px;
  margin-top: 10px;
  font-size: 15px;
  font-weight: 500;
  line-height: 20px;
  color: #201515;
}

.expand {
  margin-left: auto;
}

.link {
  height: 104px;
  padding: 4px 0 5px;
  display: flex;
  flex-direction: column;
  align-items: center;
  justify-content: space-between;
  color: #503ebd;
}

.line {
  width: 2px;
  height: 29px;
  background: linear-gradient(#bab0ec, #43309f);
}

.line.up {
  background: linear-gradient(#43309f, #bab0ec);
}

.tools {
  position: absolute;
  left: 17px;
  bottom: 9px;
  display: flex;
  gap: 7px;
}

.tool-box {
  height: 31px;
  padding: 0 8px;
  display: flex;
  align-items: center;
  gap: 12px;
  border-radius: 4px;
  background: #fffefb;
  box-shadow: 0 1px 6px rgba(0, 0, 0, 0.18);
}

.tool-box.library {
  gap: 6px;
  color: #201515;
}

.bar {
  width: 1px;
  height: 20px;
  background: #e0ddd5;
}

/* step panel */
.panel {
  width: 800px;
  display: flex;
  flex-direction: column;
  border: 2px solid #503ebd;
  border-radius: 5px;
  overflow: hidden;
  padding-bottom: 10px;
  position: relative;
}

.panel-head {
  height: 40px;
  flex: none;
  display: flex;
  align-items: flex-start;
  padding: 0 16px 0 10px;
  background: #f6f5fc;
  color: #201515;
}

.panel-head h2 {
  margin: 0 6px 0 14px;
  font-size: 14px;
  font-weight: 500;
  line-height: 30px;
}

.panel-head > svg, .panel-head button {
  margin-top: 8px;
}

.panel-head button {
  height: 16px;
  margin-left: 15px;
}

.panel-head .push {
  margin-left: auto;
}

.logo-box {
  width: 30px;
  height: 30px;
  flex: none;
  display: flex;
  align-items: center;
  justify-content: center;
  border: 1px solid #d7d3c9;
  border-radius: 3px;
  background: #fffefb;
  color: #201515;
}

.logo-box.pale {
  border-color: #e8e5dc;
}

.orange {
  width: 17px;
  height: 18px;
  border-radius: 2px;
  background: #ff4f00;
}

.stages {
  height: 39px;
  flex: none;
  display: flex;
  align-items: center;
  padding-left: 12px;
  gap: 16px;
  border-bottom: 1px solid #d2d0cb;
  background: #fffefb;
  font-size: 12px;
  font-weight: 600;
}

.stages a {
  height: 38px;
  margin-left: -4px;
  padding: 0 4px 2px;
  display: flex;
  align-items: center;
  gap: 7px;
}

.stages a.on {
  padding: 0 7px 0 4px;
  border-bottom: 2px solid #695be8;
}

.panel-body {
  flex: 1;
  min-height: 0;
  display: flex;
  flex-direction: column;
  padding: 20px;
  background: #fffefb;
}

.summary {
  height: 50px;
  display: flex;
  gap: 9px;
  flex: none;
}

.summary > svg {
  margin-top: 10px;
}

.summary-text {
  margin-left: 11px;
}

.summary h4 {
  font-size: 12px;
  font-weight: 600;
  line-height: 16px;
  color: #201515;
}

.summary p {
  margin-top: 9px;
  font-size: 12px;
  line-height: 16px;
  color: #6b6663;
}

.notice {
  height: 34px;
  flex: none;
  display: flex;
  align-items: center;
  gap: 9px;
  padding: 0 7px;
  border: 1px solid #8a80e0;
  border-radius: 3px;
  background: #f6f5fc;
  font-size: 12px;
}

.data-tabs {
  height: 48px;
  flex: none;
  display: flex;
  gap: 8px;
  padding: 10px 0 0 8px;
  font-size: 12px;
  font-weight: 600;
}

.data-tabs button {
  padding: 0 4px;
  border-bottom: 2px solid transparent;
}

.data-tabs .on {
  border-color: #695be8;
}

.data-box {
  flex: 1;
  min-height: 0;
  display: flex;
  flex-direction: column;
  border: 1px solid #e8e5e0;
  border-radius: 4px;
}

.data-search {
  height: 38px;
  flex: none;
  margin: 22px 10px;
  padding: 0 10px;
  display: flex;
  align-items: center;
  gap: 9px;
  border: 1px solid #c9c6c0;
  border-radius: 3px;
}

.data-search input {
  flex: 1;
  border: none;
  background: none;
  padding: 0;
  font: inherit;
  font-size: 12px;
}

.data-search input::placeholder {
  color: #6b6663;
  opacity: 1;
}

.data-scroll {
  flex: 1;
  min-height: 0;
  display: flex;
  overflow: hidden;
  border-bottom: 1px solid #e8e5e0;
  font-size: 12px;
}

.data-content {
  flex: 1;
  padding-left: 12px;
  margin-top: -5px;
}

.raw, .value {
  white-space: pre;
  line-height: 15px;
}

.raw {
  margin-left: 129px;
}

.more-chip {
  height: 21px;
  margin-left: 129px;
  padding: 0 5px 0 9px;
  border-radius: 3px;
  background: #d5d5f9;
  color: #55506e;
}

.row {
  display: flex;
  align-items: center;
  gap: 4px;
  margin-bottom: 4px;
}

.row.root {
  margin: 11px 0 10px;
}

.row.top {
  align-items: flex-start;
}

.row.l1 {
  margin-left: 20px;
}

.row.l2 {
  margin-left: 40px;
}

.row.l3 {
  margin-left: 60px;
}

.key-chip {
  padding: 3px 8px;
  border: 1px solid #d9d6f5;
  border-radius: 2px;
  background: #f7f5fd;
  color: #5c5956;
  line-height: 20px;
}

.key-chip.wrap {
  width: 82px;
}

.scrollbar {
  width: 16px;
  display: flex;
  flex-direction: column;
  align-items: center;
  padding: 7px 0 6px;
}

.arrow-up, .arrow-down {
  border: 5px solid transparent;
  border-top-width: 0;
  border-bottom-color: #86837f;
}

.arrow-down {
  margin-top: 6px;
  transform: rotate(180deg);
}

.thumb {
  width: 9px;
  height: 198px;
  margin-top: auto;
  border-radius: 5px;
  background: #86837f;
}

.data-foot {
  height: 45px;
  flex: none;
  display: flex;
  align-items: center;
  justify-content: flex-end;
  padding-right: 10px;
}

.btn.edit {
  font-size: 12px;
}

.panel-foot {
  height: 56px;
  flex: none;
  display: flex;
  gap: 12px;
  padding: 10px 15px 9px;
  border-top: 1px solid #e0ddd8;
  background: #fffefb;
}

.panel-foot button {
  flex: 1;
  border-radius: 3px;
  font-size: 13px;
  font-weight: 500;
}

.panel-foot .retest {
  flex-grow: 1.03;
  border: 1px solid #a8a5a0;
}

.panel-foot .continue {
  background: #695be8;
  color: #fff;
  font-weight: 600;
}

.watermark {
  position: absolute;
  right: 121px;
  bottom: 67px;
  color: rgba(150, 150, 150, 0.7);
  font-family: "Open Sans", sans-serif;
  font-size: 18px;
  line-height: 24px;
}

.watermark small {
  display: block;
  font-size: 14px;
  line-height: 20px;
}

.chat {
  position: absolute;
  right: 24px;
  bottom: 24px;
  width: 56px;
  height: 56px;
  border-radius: 50%;
  background: #3d4592;
  box-shadow: 0 2px 14px rgba(0, 0, 0, 0.25);
}

.version {
  position: absolute;
  right: 4px;
  bottom: 3px;
  color: #a8a5a0;
  font-size: 11px;
}

/* windows taskbar */
.taskbar {
  flex: none;
  height: 40px;
  display: flex;
  background: linear-gradient(90deg, #1e1e1e, #2b2520 16%, #261e1e 38%, #1e1e1e 60%);
  color: #fff;
  font-family: "Open Sans", sans-serif;
  font-size: 12px;
}

.start {
  width: 48px;
}

.task-search {
  width: 288px;
  display: flex;
  align-items: center;
  gap: 12px;
  padding: 0 9px 0 12px;
  background: #f2f2f2;
  border: 1px solid #b4b4b4;
}

.task-search input {
  flex: 1;
  min-width: 0;
  border: none;
  background: none;
  padding: 0;
  font: 14px "Open Sans", sans-serif;
}

.task-search input::placeholder {
  color: #3c3c3c;
  opacity: 1;
}

.pins {
  display: flex;
}

.pins button {
  width: 49px;
  position: relative;
}

.pins .open {
  background: linear-gradient(#76b9ed, #76b9ed) center bottom / 40px 2px no-repeat;
}

.pins .current {
  background-color: #4f4a47;
  background-size: 49px 2px;
}

.pins .epic {
  flex-direction: column;
  height: 26px;
  width: 22px;
  margin: 6px 14px;
  border-radius: 2px;
  background: #050505;
  font: 700 9px/10px "Open Sans", sans-serif;
}

.epic small {
  font-size: 5px;
  line-height: 6px;
}

.w-badge span {
  position: absolute;
  left: 22px;
  top: 16px;
  width: 16px;
  height: 16px;
  border-radius: 50%;
  background: #8d6e63;
  font-size: 9px;
  line-height: 16px;
}

.tray {
  margin-left: auto;
  display: flex;
  align-items: center;
  gap: 10px;
}

.umbrella {
  margin-right: 14px;
}

.clock {
  width: 60px;
  line-height: 18px;
  text-align: center;
}

.notif {
  width: 34px;
  padding-left: 8px;
  position: relative;
}

.notif span {
  position: absolute;
  left: 16px;
  top: 6px;
  width: 16px;
  height: 16px;
  border: 1px solid #999;
  border-radius: 50%;
  background: #2a2a2a;
  font-size: 10px;
  line-height: 14px;
  text-align: center;
}

.peek {
  width: 5px;
  height: 40px;
  border-left: 1px solid #777;
}
```
